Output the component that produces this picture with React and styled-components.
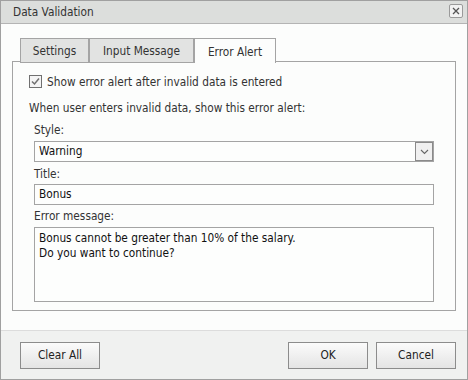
import React from 'react';
import styled, { createGlobalStyle } from 'styled-components';

const GlobalStyle = createGlobalStyle`
  html, body {
    margin: 0;
    padding: 0;
    background: #ffffff;
  }
  body {
    font-family: "DejaVu Sans Condensed", "DejaVu Sans", sans-serif;
    font-size: 11.75px;
    color: #333;
  }
  * {
    box-sizing: border-box;
  }
`;

const Window = styled.div`
  width: 468px;
  height: 380px;
  border: 1px solid #a0a0a0;
  background: #fcfdfc;
  display: flex;
  flex-direction: column;
`;

const TitleBar = styled.div`
  height: 23px;
  flex: none;
  display: flex;
  align-items: center;
  justify-content: space-between;
  padding: 0 4px 0 12px;
  background: #dcdedc;
  border-bottom: 1px solid #b4b4b4;

  h1 {
    margin: 0;
    font-size: 11.75px;
    font-weight: normal;
    color: #333;
  }
`;

const CloseButton = styled.button`
  width: 14px;
  height: 14px;
  padding: 0;
  display: flex;
  align-items: center;
  justify-content: center;
  border: 1px solid #9a9a9a;
  border-radius: 2px;
  background: #f2f2f2;
  margin-bottom: 2px;

  svg {
    display: block;
  }
`;

const Body = styled.div`
  flex: 1;
  padding: 14px 11px 17px 11px;
  display: flex;
  flex-direction: column;
`;

const TabList = styled.div`
  display: flex;
  padding-left: 8px;
  height: 24px;
  position: relative;
  z-index: 1;
  margin-bottom: -1px;
`;

const Tab = styled.div`
  width: ${p => p.$w}px;
  height: 25px;
  display: flex;
  align-items: center;
  justify-content: center;
  border: 1px solid #a4a4a4;
  border-bottom: ${p => (p.$active ? 'none' : '1px solid #a4a4a4')};
  background: ${p => (p.$active ? '#fcfdfc' : '#e2e3e2')};
  color: #333;
  padding-top: ${p => (p.$active ? '1px' : '0')};
`;

const Panel = styled.div`
  height: 250px;
  border: 1px solid #a4a4a4;
  padding: 13px 21px 0 16px;
  display: flex;
  flex-direction: column;
`;

const CheckRow = styled.label`
  display: flex;
  align-items: center;
  height: 13px;
  gap: 5px;
  color: #333;
`;

const Check = styled.span`
  width: 13px;
  height: 13px;
  border: 1px solid #707070;
  background: #f4f4f4;
  display: flex;
  align-items: center;
  justify-content: center;
`;

const Hint = styled.div`
  margin-top: 12px;
  line-height: 16px;
  color: #333;
`;

const Fields = styled.div`
  padding-left: 5px;
  display: flex;
  flex-direction: column;
`;

const Label = styled.div`
  line-height: 16px;
  margin-top: ${p => p.$top}px;
  margin-bottom: ${p => p.$bottom}px;
  color: #333;
`;

const Box = styled.div`
  height: ${p => p.$h}px;
  border: 1px solid #a4a4a4;
  background: #fdfefd;
  color: #111;
  padding: ${p => (p.$multi ? '3px 4px' : '0 0 0 4px')};
  display: flex;
  align-items: ${p => (p.$multi ? 'flex-start' : 'center')};
  justify-content: space-between;
  line-height: 15px;
  white-space: pre-line;
`;

const DropButton = styled.span`
  width: 18px;
  height: 19px;
  border: 1px solid #8a8a8a;
  background: #f0f0f0;
  display: flex;
  align-items: center;
  justify-content: center;
`;

const Footer = styled.div`
  height: 49px;
  flex: none;
  border-top: 1px solid #dcdcdc;
  background: #f0f1f0;
  display: flex;
  align-items: center;
  padding: 0 11px 0 19px;
  gap: 8px;
`;

const Button = styled.button`
  width: 80px;
  height: 27px;
  border: 1px solid #8c8c8c;
  background: linear-gradient(#fbfbfb, #e4e4e4);
  font-family: inherit;
  font-size: 11.75px;
  color: #222;
  padding: 0;
  margin-left: ${p => (p.$push ? 'auto' : '0')};
`;

const Tabs = [
  { name: 'Settings', w: 69 },
  { name: 'Input Message', w: 105 },
  { name: 'Error Alert', w: 82, active: true },
];

export default function App() {
  return (
    <>
      <GlobalStyle />
      <Window>
        <TitleBar>
          <h1>Data Validation</h1>
          <CloseButton aria-label="Close">
            <svg width="8" height="8" viewBox="0 0 8 8">
              <path d="M1 1 L7 7 M7 1 L1 7" stroke="#555" strokeWidth="1.3" />
            </svg>
          </CloseButton>
        </TitleBar>
        <Body>
          <TabList>
            {Tabs.map(t => (
              <Tab key={t.name} $w={t.w} $active={t.active}>{t.name}</Tab>
            ))}
          </TabList>
          <Panel>
            <CheckRow>
              <Check>
                <svg width="9" height="9" viewBox="0 0 9 9">
                  <path d="M1 4.5 L3.5 7 L8 1.5" fill="none" stroke="#707070" strokeWidth="1.5" />
                </svg>
              </Check>
              Show error alert after invalid data is entered
            </CheckRow>
            <Hint>When user enters invalid data, show this error alert:</Hint>
            <Fields>
              <Label $top={6} $bottom={3}>Style:</Label>
              <Box $h={21}>
                Warning
                <DropButton>
                  <svg width="9" height="6" viewBox="0 0 9 6">
                    <path d="M1 1 L4.5 4.5 L8 1" fill="none" stroke="#666" strokeWidth="1.1" />
                  </svg>
                </DropButton>
              </Box>
              <Label $top={4} $bottom={2}>Title:</Label>
              <Box $h={21}>Bonus</Box>
              <Label $top={3} $bottom={3}>Error message:</Label>
              <Box $h={75} $multi>
                {'Bonus cannot be greater than 10% of the salary.\nDo you want to continue?'}
              </Box>
            </Fields>
          </Panel>
        </Body>
        <Footer>
          <Button>Clear All</Button>
          <Button $push>OK</Button>
          <Button>Cancel</Button>
        </Footer>
      </Window>
    </>
  );
}
